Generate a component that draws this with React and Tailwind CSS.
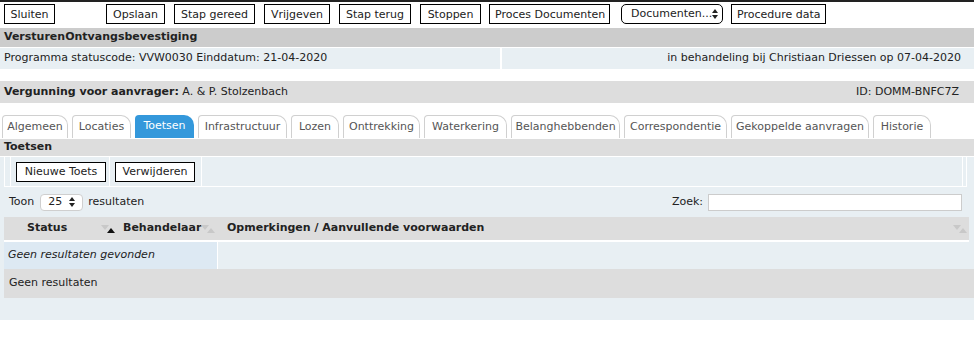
import React from 'react';

const font = { fontFamily: '"DejaVu Sans", Verdana, sans-serif' };

const topButtons = [
  { label: 'Opslaan', w: 'w-[59px]' },
  { label: 'Stap gereed', w: 'w-[81px]' },
  { label: 'Vrijgeven', w: 'w-[66px]' },
  { label: 'Stap terug', w: 'w-[72px]' },
  { label: 'Stoppen', w: 'w-[61px]' },
];

const tabs = [
  { label: 'Algemeen', w: 'w-[66px]' },
  { label: 'Locaties', w: 'w-[59px]' },
  { label: 'Toetsen', w: 'w-[59px]' },
  { label: 'Infrastructuur', w: 'w-[89px]' },
  { label: 'Lozen', w: 'w-[48px]' },
  { label: 'Onttrekking', w: 'w-[77px]' },
  { label: 'Waterkering', w: 'w-[83px]' },
  { label: 'Belanghebbenden', w: 'w-[109px]' },
  { label: 'Correspondentie', w: 'w-[103px]' },
  { label: 'Gekoppelde aanvragen', w: 'w-[138px]' },
  { label: 'Historie', w: 'w-[58px]' },
];

// Small sort arrows as used in the table header
const SortIcon = ({ active }) => (
  <svg width="16" height="10" viewBox="0 0 16 10" className="shrink-0">
    <polygon points="1,1 9,1 5,6" fill="#c8c8c8" />
    <polygon points="7,9 15,9 11,4" fill={active ? '#111' : '#c8c8c8'} />
  </svg>
);

// Up/down arrows of a native select
const SelectArrows = () => (
  <svg width="6" height="10" viewBox="0 0 6 10" className="shrink-0">
    <polygon points="0,4 6,4 3,0" fill="#222" />
    <polygon points="0,6 6,6 3,10" fill="#222" />
  </svg>
);

const Button = ({ children, className = '' }) => (
  <button className={`h-[20px] px-[5px] border border-black bg-white text-[11px] text-[#222] leading-none whitespace-nowrap ${className}`}>
    {children}
  </button>
);

const App = () => {
  return (
    <div className="w-[974px] h-[337px] bg-white text-[11px] text-[#222] overflow-hidden" style={font}>
      {/* Toolbar */}
      <div className="border-t-2 border-[#222] flex items-center h-[26px] pl-[4px]">
        <Button className="w-[51px]">Sluiten</Button>
        <div className="flex items-center gap-[9px] ml-[51px]">
          {topButtons.map((b) => (
            <Button key={b.label} className={b.w}>
              {b.label}
            </Button>
          ))}
        </div>
        <Button className="w-[121px] ml-[8px]">Proces Documenten</Button>
        <div className="h-[20px] w-[102px] ml-[11px] border border-black rounded-[5px] bg-white flex items-center justify-between pl-[9px] pr-[5px]">
          <span>Documenten...</span>
          <SelectArrows />
        </div>
        <Button className="w-[95px] ml-[8px]">Procedure data</Button>
      </div>

      {/* Status header */}
      <div className="bg-[#cccccc] h-[19px] mt-[2px] flex items-center px-[4px] font-bold">
        VersturenOntvangsbevestiging
      </div>
      <div className="bg-[#e8eff3] h-[21px] mt-[1px] flex items-center">
        <div className="w-[502px] px-[4px] h-full flex items-center border-r-2 border-white">
          Programma statuscode: VVW0030 Einddatum: 21-04-2020
        </div>
        <div className="flex-1 text-right pr-[13px]">
          in behandeling bij Christiaan Driessen op 07-04-2020
        </div>
      </div>

      {/* Applicant */}
      <div className="bg-[#dddddd] h-[22px] mt-[12px] flex items-center justify-between px-[4px]">
        <div>
          <span className="font-bold">Vergunning voor aanvrager:</span> A. &amp; P. Stolzenbach
        </div>
        <div className="pr-[11px]">ID: DOMM-BNFC7Z</div>
      </div>

      {/* Tabs */}
      <div className="flex items-end gap-[4px] pl-[2px] mt-[12px] h-[23px]">
        {tabs.map((t) => (
          <div
            key={t.label}
            className={
              t.label === 'Toetsen'
                ? `${t.w} h-[23px] flex items-center justify-center whitespace-nowrap rounded-tl-[4px] rounded-tr-[10px] bg-[#3498db] text-white`
                : `${t.w} h-[23px] flex items-center justify-center whitespace-nowrap rounded-tl-[4px] rounded-tr-[10px] bg-white text-[#555] border border-b-0 border-[#d0d0d0]`
            }
          >
            {t.label}
          </div>
        ))}
      </div>

      {/* Section */}
      <div className="bg-[#dddddd] h-[17px] mt-[1px] flex items-center px-[4px] font-bold">Toetsen</div>

      <div className="bg-[#e8eff3] pb-[22px] mt-[1px]">
        {/* Toolbar table */}
        <div className="flex h-[30px] border-b border-white ml-[4px] mr-[7px] border-l border-r">
          <div className="w-[6px] border-r border-white" />
          <div className="w-[99px] border-r border-white flex items-center pl-[5px]">
            <Button className="w-[90px]">Nieuwe Toets</Button>
          </div>
          <div className="w-[92px] border-r border-white flex items-center pl-[5px]">
            <Button className="w-[80px]">Verwijderen</Button>
          </div>
          <div className="flex-1 border-r border-white mr-[3px]" />
        </div>

        {/* Length + search */}
        <div className="flex items-center justify-between h-[30px] px-[9px] pr-[12px]">
          <div className="flex items-center">
            <span>Toon</span>
            <div className="h-[17px] w-[43px] ml-[6px] bg-white border border-[#cfcfcf] rounded-[4px] flex items-center justify-between pl-[7px] pr-[7px]">
              <span>25</span>
              <SelectArrows />
            </div>
            <span className="ml-[5px]">resultaten</span>
          </div>
          <div className="flex items-center gap-[5px]">
            <span>Zoek:</span>
            <div className="w-[254px] h-[17px] bg-white border border-[#cccccc]" />
          </div>
        </div>

        {/* Table header */}
        <div className="flex items-center h-[25px] bg-[#dddddd] ml-[4px] mr-[5px] font-bold border-b-2 border-white">
          <div className="w-[96px] pl-[23px]">Status</div>
          <SortIcon active />
          <div className="w-[84px] pl-[7px]">Behandelaar</div>
          <SortIcon />
          <div className="flex-1 pl-[11px]">Opmerkingen / Aanvullende voorwaarden</div>
          <div className="pr-[1px]">
            <SortIcon />
          </div>
        </div>

        {/* Empty row */}
        <div className="flex h-[27px]">
          <div className="w-[4px]" />
          <div className="w-[214px] bg-[#dde9f3] border-r border-white flex items-center pl-[4px] italic">
            Geen resultaten gevonden
          </div>
        </div>

        {/* Footer */}
        <div className="bg-[#dddddd] h-[29px] ml-[4px] flex items-center pl-[5px]">Geen resultaten</div>
      </div>
    </div>
  );
};

export default App;
